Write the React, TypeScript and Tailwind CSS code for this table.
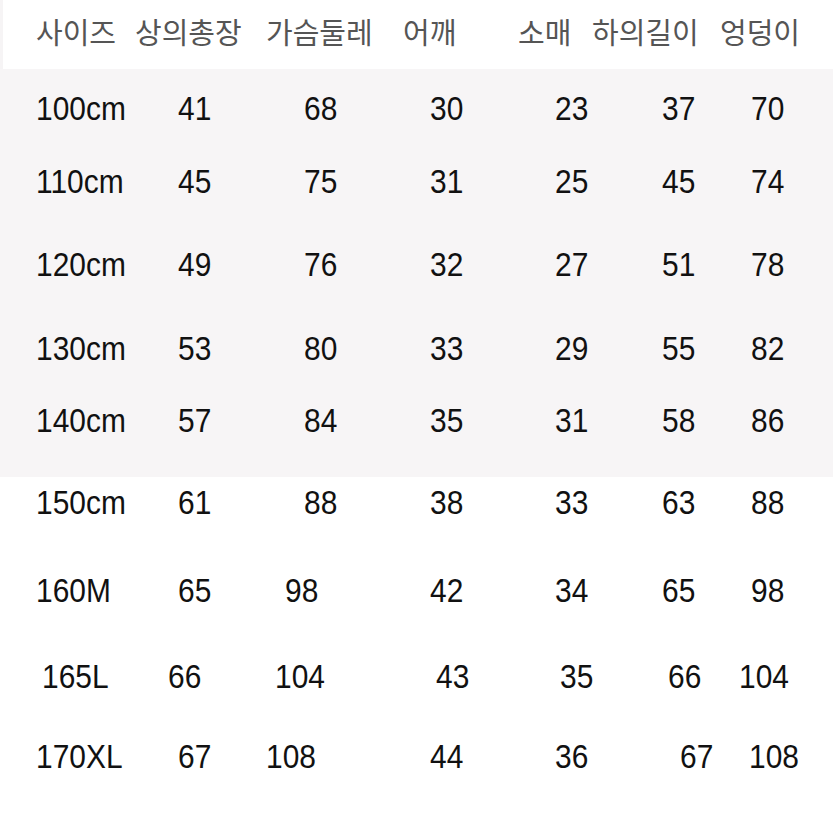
import React from "react";

const headers = [
  { text: "사이즈", cls: "w-[99px]" },
  { text: "상의총장", cls: "w-[131px]" },
  { text: "가슴둘레", cls: "w-[137px]" },
  { text: "어깨", cls: "w-[115px]" },
  { text: "소매", cls: "w-[74px]" },
  { text: "하의길이", cls: "w-[128px]" },
  { text: "엉덩이", cls: "" },
];

// standard column widths, label column starts at pl-[36px]
const colW = ["w-[142px]", "w-[126px]", "w-[126px]", "w-[125px]", "w-[107px]", "w-[89px]", ""];

type Row = { cells: string[]; shift?: string[]; gap: string };

const grayRows: Row[] = [
  { cells: ["100cm", "41", "68", "30", "23", "37", "70"], gap: "mt-[19px]" },
  { cells: ["110cm", "45", "75", "31", "25", "45", "74"], gap: "mt-[33px]" },
  { cells: ["120cm", "49", "76", "32", "27", "51", "78"], gap: "mt-[43px]" },
  { cells: ["130cm", "53", "80", "33", "29", "55", "82"], gap: "mt-[44px]" },
  { cells: ["140cm", "57", "84", "35", "31", "58", "86"], gap: "mt-[32px]" },
];

const whiteRows: Row[] = [
  { cells: ["150cm", "61", "88", "38", "33", "63", "88"], gap: "mt-[5px]" },
  {
    cells: ["160M", "65", "98", "42", "34", "65", "98"],
    shift: ["", "", "ml-[-19px]", "", "", "", ""],
    gap: "mt-[48px]",
  },
  {
    cells: ["165L", "66", "104", "43", "35", "66", "104"],
    shift: ["ml-[6px]", "ml-[-10px]", "ml-[-29px]", "ml-[6px]", "ml-[5px]", "ml-[6px]", "ml-[-12px]"],
    gap: "mt-[46px]",
  },
  {
    cells: ["170XL", "67", "108", "44", "36", "67", "108"],
    shift: ["", "", "ml-[-38px]", "", "", "ml-[18px]", "ml-[-2px]"],
    gap: "mt-[40px]",
  },
];

function SizeRow({ row }: { row: Row }) {
  return (
    <div className={`flex h-[40px] shrink-0 items-center pl-[36px] ${row.gap}`}>
      {row.cells.map((c, i) => (
        <div key={i} className={`${colW[i]} shrink-0`}>
          <span
            className={`inline-block origin-left scale-x-[0.88] text-[34px] leading-[40px] text-[#111] ${
              row.shift ? row.shift[i] : ""
            }`}
          >
            {c}
          </span>
        </div>
      ))}
    </div>
  );
}

export default function App() {
  return (
    <div
      className="flex flex-col w-[833px] h-[827px] overflow-hidden bg-white"
      style={{ fontFamily: '"Liberation Sans", Arial, sans-serif' }}
    >
      {/* header */}
      <div className="bg-[#f6f4f5] pl-[3px]">
        <div className="flex h-[69px] items-center bg-white pl-[33px] pb-[6px]">
          {headers.map((h) => (
            <div
              key={h.text}
              className={`${h.cls} shrink-0 text-[29px] leading-none text-[#555]`}
              style={{ fontFamily: '"Noto Sans CJK KR", sans-serif' }}
            >
              {h.text}
            </div>
          ))}
        </div>
      </div>

      {/* shaded block */}
      <div className="flex flex-col bg-[#f7f5f6] h-[408px] shrink-0">
        {grayRows.map((r) => (
          <SizeRow key={r.cells[0]} row={r} />
        ))}
      </div>

      {whiteRows.map((r) => (
        <SizeRow key={r.cells[0]} row={r} />
      ))}
    </div>
  );
}
